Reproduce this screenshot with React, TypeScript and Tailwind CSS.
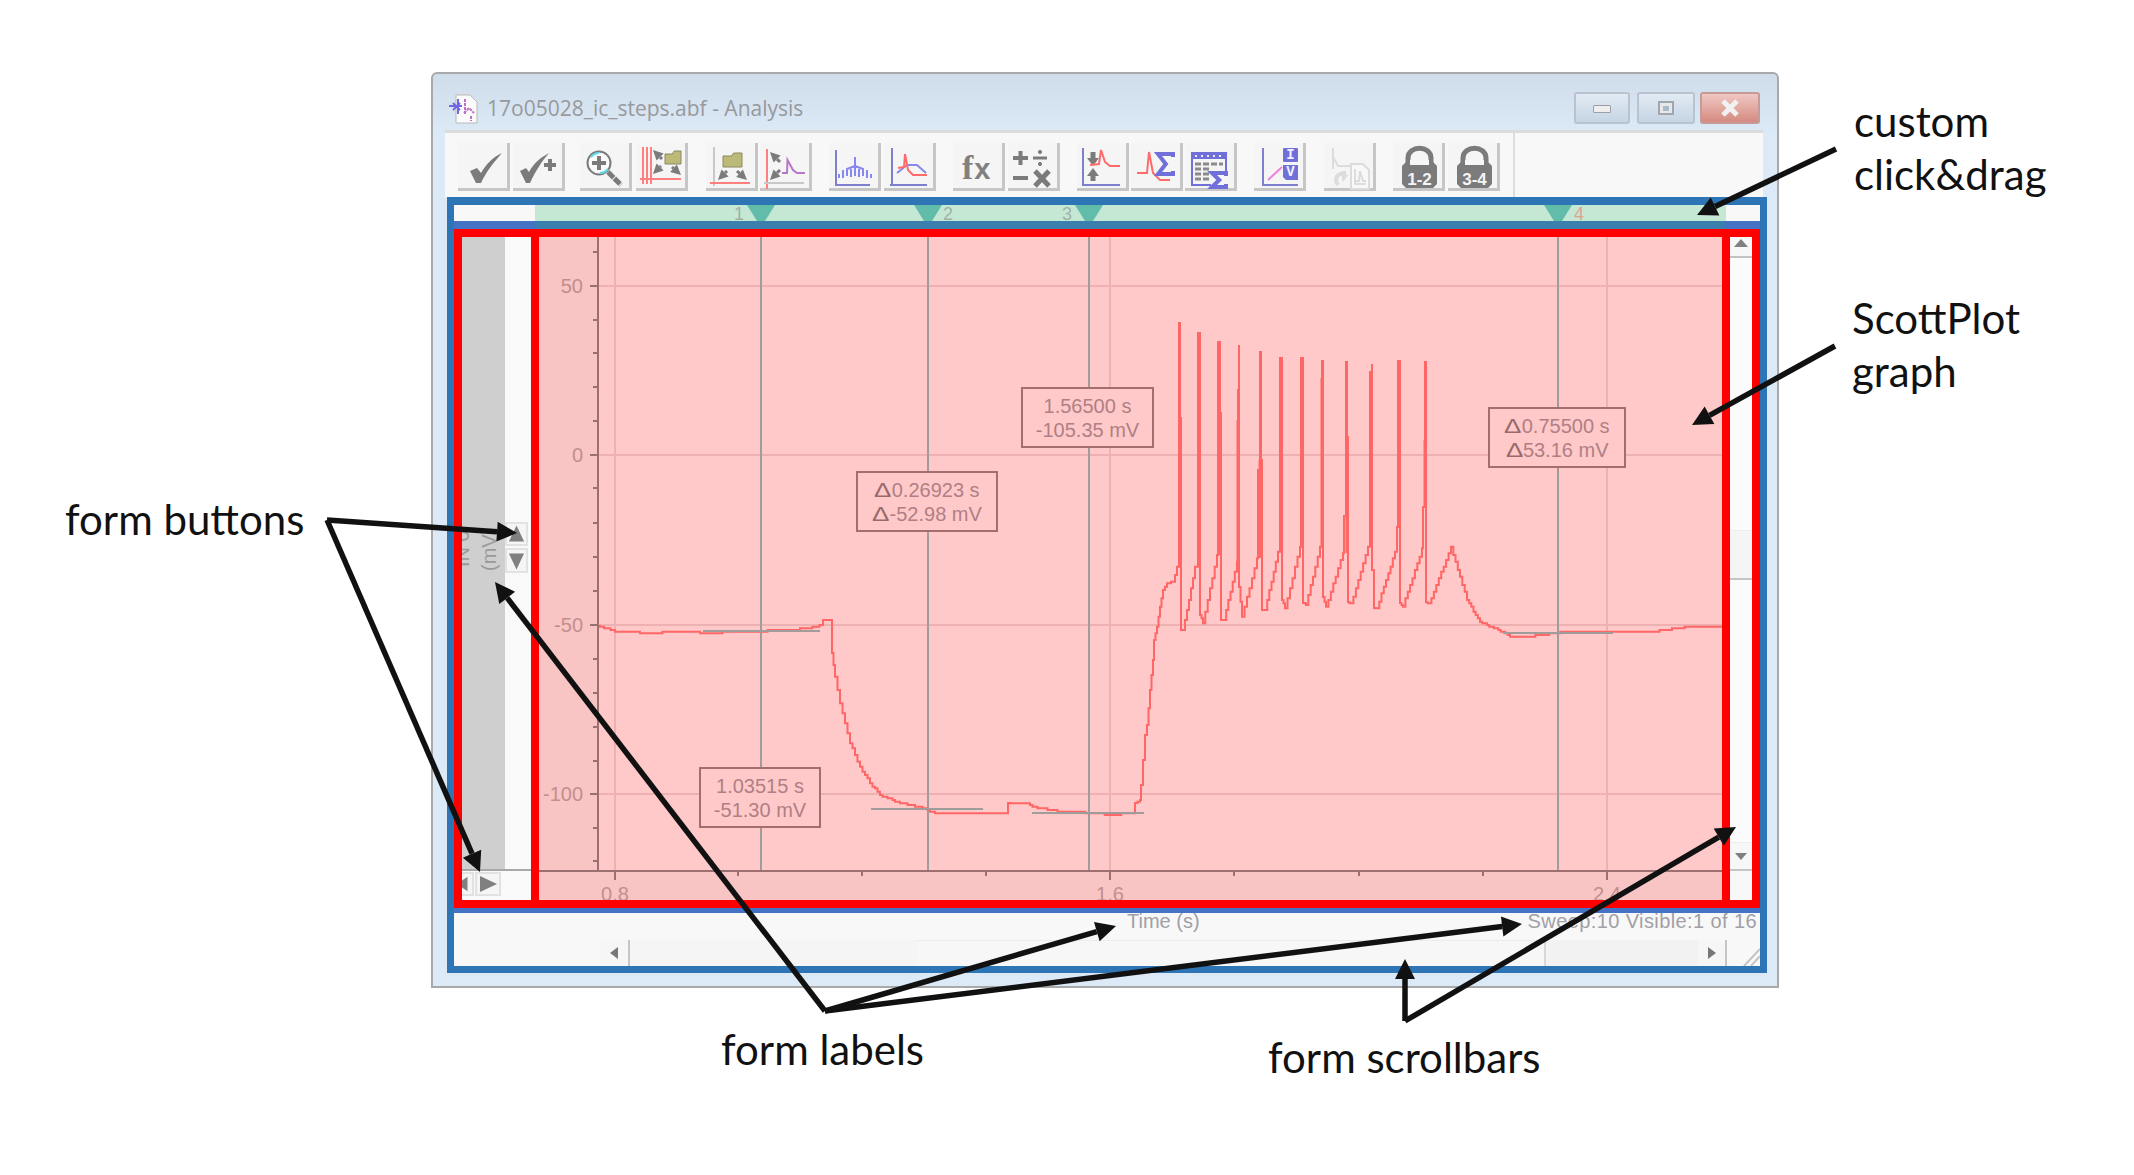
import type { ReactNode } from "react";

type Pt = [number, number];

const GRAY = "#7b7b7b";
const AXIS_BLUE = "#7f7fd0";
const TRACE_RED = "#ff7f7f";
const PURPLE = "#7070d8";

// turns a polyline into the staircase a low res plot gives
const stepped = (pts: Pt[]) => {
  let d = `M${pts[0][0]} ${pts[0][1]}`;
  for (let i = 1; i < pts.length; i++) {
    const [x0, y0] = pts[i - 1];
    const [x1, y1] = pts[i];
    const n = Math.ceil(Math.abs(x1 - x0) / 2.5);
    if (n <= 1) {
      d += ` H${x1} V${y1}`;
      continue;
    }
    for (let j = 1; j <= n; j++) {
      const x = x0 + ((x1 - x0) * j) / n;
      const y = Math.round((y0 + ((y1 - y0) * j) / n) * 0.6) / 0.6;
      d += ` H${x.toFixed(1)} V${y.toFixed(1)}`;
    }
  }
  return d;
};

const trace: Pt[] = [
  [598, 626], [606, 628], [615, 631], [630, 632], [650, 633], [670, 632], [690, 632], [710, 633], [730, 632],
  [760, 631], [790, 630], [810, 628], [822, 625], [823, 620], [830, 620], [832, 653], [835, 677], [840, 703],
  [845, 723], [850, 743], [860, 767], [870, 783], [880, 795], [900, 803], [920, 807], [935, 813], [1007, 813],
  [1008, 803], [1015, 804], [1025, 803], [1035, 807], [1050, 810], [1065, 812], [1078, 812], [1112, 815],
  [1133, 813], [1135, 803], [1140, 800], [1141, 785], [1143, 760], [1145, 735], [1147, 725], [1150, 690],
  [1153, 660], [1154, 640], [1157, 627], [1160, 607], [1163, 590], [1167, 583], [1173, 582], [1177, 567],
  [1179, 563], [1179, 323], [1180, 323], [1180, 418], [1181, 418], [1181, 630], [1183, 630], [1187, 610],
  [1195, 567], [1198, 565], [1198, 333], [1200, 337], [1200, 615], [1203, 623], [1217, 555], [1218, 342],
  [1219, 342], [1220, 413], [1221, 620], [1224, 620], [1237, 562], [1238, 390], [1239, 345], [1239, 587],
  [1242, 617], [1257, 558], [1258, 470], [1260, 352], [1261, 460], [1262, 460], [1262, 610], [1265, 610],
  [1278, 552], [1280, 358], [1282, 370], [1282, 600], [1285, 608], [1300, 547], [1301, 358], [1303, 415],
  [1303, 603], [1306, 605], [1320, 547], [1322, 361], [1323, 378], [1323, 597], [1326, 607], [1343, 553],
  [1344, 516], [1346, 362], [1347, 437], [1348, 437], [1348, 602], [1351, 604], [1368, 547], [1370, 372],
  [1372, 364], [1372, 570], [1374, 570], [1374, 608], [1377, 608], [1395, 552], [1397, 527], [1398, 361],
  [1400, 433], [1400, 603], [1403, 606], [1422, 549], [1423, 507], [1425, 362], [1426, 440], [1426, 602],
  [1429, 604], [1451, 547], [1460, 577], [1467, 600], [1480, 622], [1503, 632], [1510, 636], [1533, 636],
  [1549, 634], [1567, 631], [1657, 631], [1672, 629], [1687, 627], [1722, 627],
];

// lower part of each spike reads thicker in the plot
const spikeBases: [number, number, number][] = [
  [1180, 418, 563], [1199, 337, 565], [1220, 413, 555], [1238, 420, 562], [1260, 460, 558], [1281, 370, 552],
  [1302, 415, 547], [1322, 378, 547], [1347, 437, 553], [1371, 372, 547], [1399, 433, 527], [1425, 440, 507],
];

const yLabels: [string, number][] = [["50", 286], ["0", 455], ["-50", 625], ["-100", 794]];
const yMinor = [252, 320, 353, 387, 421, 488, 523, 557, 591, 659, 693, 727, 761, 828, 861];
const xLabels: [string, number][] = [["0.8", 615], ["1.6", 1110], ["2.4", 1607]];
const xMinor = [738, 862, 986, 1234, 1359, 1483];
const cursors = [761, 928, 1089, 1558];
const levels: [number, number, number][] = [[703, 820, 631], [871, 983, 809], [1032, 1144, 813], [1503, 1613, 633]];

const readouts = [
  { pos: "left-[160px] top-[530px] w-[122px]", lines: ["1.03515 s", "-51.30 mV"] },
  { pos: "left-[317px] top-[234px] w-[142px]", lines: ["Δ0.26923 s", "Δ-52.98 mV"] },
  { pos: "left-[482px] top-[150px] w-[133px]", lines: ["1.56500 s", "-105.35 mV"] },
  { pos: "left-[949px] top-[170px] w-[138px]", lines: ["Δ0.75500 s", "Δ53.16 mV"] },
];

const Plot = () => (
  <div className="relative w-[1183px] shrink-0 overflow-hidden bg-[#f8c4c4] font-['Liberation_Sans',sans-serif]">
    <svg className="absolute inset-0" width={1183} height={663} viewBox="539 237 1183 663">
      <rect x={598} y={237} width={1124} height={634} fill="#ffc9c9" />
      {yLabels.map(([, y]) => (
        <line key={y} x1={598} x2={1722} y1={y} y2={y} stroke="#eeb1b1" strokeWidth={2} />
      ))}
      {xLabels.map(([, x]) => (
        <line key={x} x1={x} x2={x} y1={237} y2={871} stroke="#eeb1b1" strokeWidth={2} />
      ))}
      {cursors.map((x) => (
        <line key={x} x1={x} x2={x} y1={237} y2={871} stroke="#a09c9c" strokeWidth={2} />
      ))}
      <path d={stepped(trace)} fill="none" stroke="#ff6666" strokeWidth={2} />
      {spikeBases.map(([x, a, b]) => (
        <line key={x} x1={x} x2={x} y1={a} y2={b} stroke="#ff6666" strokeWidth={3} />
      ))}
      {levels.map(([a, b, y]) => (
        <line key={a} x1={a} x2={b} y1={y} y2={y} stroke="#a09c9c" strokeWidth={2} />
      ))}
      <line x1={598} x2={598} y1={237} y2={872} stroke="#9c7070" strokeWidth={2} />
      <line x1={539} x2={1722} y1={871} y2={871} stroke="#9c7070" strokeWidth={2} />
      {yMinor.map((y) => (
        <line key={y} x1={593} x2={598} y1={y} y2={y} stroke="#9c7070" strokeWidth={2} />
      ))}
      {xMinor.map((x) => (
        <line key={x} x1={x} x2={x} y1={871} y2={876} stroke="#9c7070" strokeWidth={2} />
      ))}
      {yLabels.map(([t, y]) => (
        <g key={t}>
          <line x1={590} x2={598} y1={y} y2={y} stroke="#9c7070" strokeWidth={2} />
          <text x={583} y={y + 7} textAnchor="end" fontSize={20} fill="#c18f8f">{t}</text>
        </g>
      ))}
      {xLabels.map(([t, x]) => (
        <g key={t}>
          <line x1={x} x2={x} y1={871} y2={880} stroke="#9c7070" strokeWidth={2} />
          <text x={x} y={901} textAnchor="middle" fontSize={20} fill="#c18f8f">{t}</text>
        </g>
      ))}
    </svg>
    {readouts.map((r) => (
      <div
        key={r.lines[0]}
        className={`absolute ${r.pos} flex h-[61px] flex-col items-center justify-center border-2 border-[#a56e6e] bg-[#ffc9c9] text-[20px] leading-[24px] text-[#b07f85]`}
      >
        {r.lines.map((l) => (
          <span key={l} className="whitespace-nowrap">
            {l.startsWith("Δ") && <span className="mx-[2px] inline-block scale-x-[1.3] text-[#9a6a6a]">Δ</span>}
            {l.replace("Δ", "")}
          </span>
        ))}
      </div>
    ))}
  </div>
);

const Arrow = ({ from, to, w = 5.5, head = 20, color = "#111" }: { from: Pt; to: Pt; w?: number; head?: number; color?: string }) => {
  const a = Math.atan2(to[1] - from[1], to[0] - from[0]);
  const bx = to[0] - Math.cos(a) * head;
  const by = to[1] - Math.sin(a) * head;
  const nx = (-Math.sin(a) * head) / 2;
  const ny = (Math.cos(a) * head) / 2;
  return (
    <g>
      <line x1={from[0]} y1={from[1]} x2={bx} y2={by} stroke={color} strokeWidth={w} />
      <polygon points={`${to[0]},${to[1]} ${bx + nx},${by + ny} ${bx - nx},${by - ny}`} fill={color} />
    </g>
  );
};

const Ic = ({ children }: { children: ReactNode }) => (
  <svg width={52} height={48} viewBox="0 0 52 48" className="absolute left-0 top-0">{children}</svg>
);

const Small = ({ from, to }: { from: Pt; to: Pt }) => <Arrow from={from} to={to} w={3} head={10} color={GRAY} />;

const Folder = ({ x, y, w, h }: { x: number; y: number; w: number; h: number }) => (
  <path d={`M${x} ${y + 3} h${w * 0.45} l2 -3 h${w * 0.55 - 2} v${h} h${-w} z`} fill="#bdb978" stroke="#8a8a60" strokeWidth={1} />
);

const Sigma = ({ x, y, w, h }: { x: number; y: number; w: number; h: number }) => (
  <path
    d={`M${x + w} ${y + 4} V${y + 1} H${x + 1} L${x + w * 0.55} ${y + h / 2} L${x + 1} ${y + h - 1} H${x + w} V${y + h - 4}`}
    fill="none"
    stroke={PURPLE}
    strokeWidth={4}
  />
);

const Axes = ({ x, x2, top }: { x: number; x2: number; top: number }) => (
  <path d={`M${x} ${top} V42 H${x2}`} fill="none" stroke={AXIS_BLUE} strokeWidth={2} />
);

const Lock = ({ label }: { label: string }) => (
  <>
    <path d="M15 22 V15 C15 2 38 2 38 15 V22" fill="none" stroke={GRAY} strokeWidth={5} />
    <path d="M9 23 L14 18 H39 L44 23 V41 L40 45 H13 L9 41 Z" fill={GRAY} />
    <rect x={17} y={17} width={19} height={5} fill="#f7f7f7" />
    <text x={26.5} y={42} textAnchor="middle" fontSize={17} fontWeight={700} fill="#f4f4f4" fontFamily="'Liberation Sans', sans-serif">
      {label}
    </text>
  </>
);

const groups: { cls: string; icons: ReactNode[] }[] = [
  {
    cls: "ml-[13px] gap-[3px]",
    icons: [
      <path key="c" d="M12 28 L19 25 L23 30 C28 21 35 14 44 10 C36 19 28 29 23 40 L18 40 Z" fill={GRAY} />,
      <g key="c+">
        <path d="M7 28 L13 25 L16 29 C21 20 27 15 36 10 C29 18 22 29 17 40 L13 40 Z" fill={GRAY} />
        <path d="M31 22 H43 M37 16 V28" stroke={GRAY} strokeWidth={4} />
      </g>,
    ],
  },
  {
    cls: "ml-[15px] gap-[4px]",
    icons: [
      <g key="z">
        <circle cx={19} cy={20} r={11.5} fill="#fafafa" stroke={GRAY} strokeWidth={2} />
        <path d="M11 14 A11 11 0 0 1 19 10 M28 26 A11 11 0 0 1 20 30" stroke="#60d8e8" strokeWidth={2} fill="none" />
        <path d="M12 20 H26 M19 13 V27" stroke={GRAY} strokeWidth={4} />
        <path d="M28 29 L41 42" stroke={GRAY} strokeWidth={5} strokeDasharray="8 1" />
      </g>,
      <g key="f">
        <path d="M7 4 V41 M11 4 V41 M15 4 V41 M4 36 H45" stroke={TRACE_RED} strokeWidth={2} />
        <Folder x={29} y={8} w={16} h={13} />
        <Small from={[26, 16]} to={[17, 7]} />
        <Small from={[25, 23]} to={[17, 31]} />
        <Small from={[36, 24]} to={[45, 32]} />
      </g>,
    ],
  },
  {
    cls: "ml-[18px] gap-[2px]",
    icons: [
      <g key="f2">
        <path d="M8 4 V43" stroke="#c8c8c8" strokeWidth={2} />
        <path d="M4 40 H44" stroke={TRACE_RED} strokeWidth={2} />
        <Folder x={17} y={10} w={19} h={14} />
        <Small from={[21, 28]} to={[12, 37]} />
        <Small from={[31, 28]} to={[41, 37]} />
      </g>,
      <g key="s">
        <path d="M7 6 V46" stroke={TRACE_RED} strokeWidth={2} />
        <path d="M4 40 H44" stroke="#c8c8c8" strokeWidth={2} />
        <Small from={[20, 19]} to={[10, 9]} />
        <Small from={[20, 27]} to={[10, 37]} />
        <path d="M22 30 H27 L27.5 17 L33 27 L37 30 H45" fill="none" stroke="#b878c8" strokeWidth={2} />
      </g>,
    ],
  },
  {
    cls: "ml-[17px] gap-[3px]",
    icons: [
      <g key="p">
        <Axes x={7} x2={41} top={7} />
        <path
          d="M26 14 V33 M26 23 L18 26 V33 M26 23 L34 26 V33 M14 27 V35 M10 31 V35 M38 27 V35 M42 31 V35 M22 26 V34 M30 26 V34"
          fill="none"
          stroke="#8888f0"
          strokeWidth={2}
        />
      </g>,
      <g key="o">
        <Axes x={8} x2={43} top={5} />
        <path d="M6 42 H10" stroke={AXIS_BLUE} strokeWidth={2} />
        <path d="M13 30 L23 22 H33 L42 30" fill="none" stroke="#8888f0" strokeWidth={2} />
        <path d="M14 25 L20 24 L21 11 L24 27 L29 32 H43" fill="none" stroke="#ff6a6a" strokeWidth={2} />
      </g>,
    ],
  },
  {
    cls: "ml-[17px] gap-[3px]",
    icons: [
      <text key="fx" x={9} y={36} fontSize={34} fontWeight={700} fill="#808080" fontFamily="'Liberation Serif', serif">
        f<tspan dx={1} fontFamily="'Liberation Sans', sans-serif" fontSize={29}>x</tspan>
      </text>,
      <g key="ops" stroke={GRAY} strokeWidth={4}>
        <path d="M5 15 H20 M12.5 8 V22 M5 35 H20" />
        <path d="M25 15 H39" strokeWidth={3} />
        <circle cx={32} cy={9} r={1.6} fill={GRAY} strokeWidth={1} />
        <circle cx={32} cy={21} r={1.6} fill={GRAY} strokeWidth={1} />
        <path d="M27 28 L41 43 M41 28 L27 43" strokeWidth={5} />
      </g>,
    ],
  },
  {
    cls: "ml-[17px] gap-[2px]",
    icons: [
      <g key="b">
        <Axes x={6} x2={43} top={5} />
        <path d="M16 9 V16" stroke={GRAY} strokeWidth={5} />
        <polygon points="10,15 22,15 16,23" fill={GRAY} />
        <polygon points="10,33 22,33 16,25" fill={GRAY} />
        <path d="M16 32 V38" stroke={GRAY} strokeWidth={5} />
        <path d="M13 22 L22 21 L24 7 L28 19 L33 23 H43" fill="none" stroke="#ff6a6a" strokeWidth={2} />
      </g>,
      <g key="sum">
        <path d="M6 30 H16 L18 9 L22 30 L29 37 H39" fill="none" stroke="#ff6a6a" strokeWidth={2} />
        <Sigma x={26} y={10} w={16} h={22} />
      </g>,
      <g key="tab">
        <rect x={7} y={10} width={34} height={32} fill="#f4f4f4" stroke={PURPLE} strokeWidth={2} />
        <rect x={7} y={10} width={34} height={6} fill={PURPLE} />
        <path d="M10 13 H38" stroke="#e8e8ff" strokeWidth={2} strokeDasharray="2 4" />
        <path d="M10 21 H38 M10 26 H26 M10 31 H24 M10 36 H24" stroke="#8a8a8a" strokeWidth={3} strokeDasharray="6 2" />
        <rect x={26} y={28} width={16} height={18} fill="#f6f6f6" />
        <Sigma x={26} y={29} w={15} h={16} />
      </g>,
    ],
  },
  {
    cls: "ml-[17px]",
    icons: [
      <g key="iv" fontFamily="'Liberation Mono', monospace" fontWeight={700} fontSize={14} fill="#f0f0ff" textAnchor="middle">
        <Axes x={9} x2={44} top={5} />
        <path d="M8 42 H44" stroke={AXIS_BLUE} strokeWidth={2} />
        <path d="M14 37 L28 24" stroke="#f080e0" strokeWidth={2} />
        <rect x={29} y={5} width={15} height={14} rx={1} fill={PURPLE} />
        <text x={36.5} y={16}>I</text>
        <path d="M29 22 H44 V37 H32 L29 34 Z" fill={PURPLE} />
        <text x={36.5} y={33}>V</text>
      </g>,
    ],
  },
  {
    cls: "ml-[18px]",
    icons: [
      <g key="dis" fill="none" stroke="#dcdcdc" strokeWidth={2}>
        <path d="M9 5 V26 M9 14 L14 23 H26" />
        <path d="M27 21 H39 L45 27 V46 H27 Z" fill="#f8f8f8" />
        <path d="M31 26 V41 H42 M31 38 H35 L36 28 L39 38 H42" />
        <path d="M22 30 C12 30 10 36 14 42" strokeWidth={4} />
        <polygon points="17,30 24,32 19,39" fill="#dcdcdc" stroke="none" />
      </g>,
    ],
  },
  {
    cls: "ml-[17px] gap-[3px]",
    icons: [<Lock key="l1" label="1-2" />, <Lock key="l2" label="3-4" />],
  },
];

const Toolbar = () => (
  <div className="ml-[12px] flex h-[67px] w-[1318px] border-t-[3px] border-[#dcdcdc] bg-[#f8f8f8] pt-[10px]">
    {groups.map((g, i) => (
      <div key={i} className={`flex h-[48px] ${g.cls}`}>
        {g.icons.map((icon, j) => (
          <div key={j} className="relative h-[48px] w-[52px] border-b-[3px] border-r-[3px] border-[#c6c6c6] bg-[#f5f5f5]">
            <Ic>{icon}</Ic>
          </div>
        ))}
      </div>
    ))}
    <div className="ml-[13px] -mt-[10px] h-[64px] w-[2px] bg-[#dddddd]" />
  </div>
);

const TitleButton = ({ cls, children }: { cls: string; children: ReactNode }) => (
  <div className={`flex h-[32px] items-center justify-center rounded-[3px] border-2 ${cls}`}>{children}</div>
);

const TitleBar = () => (
  <div className="flex h-[56px] shrink-0 items-center pl-[16px] pr-[17px] pt-[14px]">
    <svg width={30} height={30} viewBox="0 0 30 30">
      <path d="M7 1 H21 L28 8 V29 H7 Z" fill="#fbfbfb" stroke="#b9b9b9" />
      <path d="M0 12 H13 M9 5 V20 M4 9 L11 16 M4 16 L11 9" stroke="#7068e0" strokeWidth={2} />
      <path d="M16 5 V20 M22 22 V27 M15 19 L20 14 L25 19" fill="none" stroke="#c070c0" strokeWidth={2} strokeDasharray="3 1" />
    </svg>
    <span className="ml-[8px] font-['Open_Sans',sans-serif] text-[21px] text-[#98999c]">17o05028_ic_steps.abf - Analysis</span>
    <div className="ml-auto -mt-[2px] flex">
      <TitleButton cls="w-[56px] border-[#b9c3cf] bg-gradient-to-b from-[#e2ebf4] to-[#c6d4e3]">
        <div className="mt-[2px] h-[8px] w-[18px] rounded-[1px] border border-[#9aa0a6] bg-[#eeeeee]" />
      </TitleButton>
      <TitleButton cls="ml-[7px] w-[58px] border-[#b9c3cf] bg-gradient-to-b from-[#e2ebf4] to-[#c6d4e3]">
        <div className="flex h-[14px] w-[16px] items-center justify-center border-2 border-[#a0a6ad] bg-[#e8e8e8]">
          <div className="h-[5px] w-[6px] bg-[#a9b9ca]" />
        </div>
      </TitleButton>
      <TitleButton cls="ml-[5px] w-[60px] border-[#c59a98] bg-gradient-to-b from-[#f0c8c4] to-[#d48a80]">
        <svg width={20} height={18} viewBox="0 0 20 18">
          <path d="M3 2 L17 16 M17 2 L3 16" stroke="#f2f2f2" strokeWidth={5} />
        </svg>
      </TitleButton>
    </div>
  </div>
);

const MiniButton = ({ cls, points }: { cls: string; points: string }) => (
  <div className={`flex items-center justify-center border-2 border-[#e2e2e2] bg-[#f5f5f5] ${cls}`}>
    <svg width={20} height={20} viewBox="0 0 20 20">
      <polygon points={points} fill="#808080" />
    </svg>
  </div>
);

const LeftPanel = () => (
  <div className="flex w-[69px] shrink-0 flex-col">
    <div className="flex h-[634px] border-b-2 border-[#a8a8a8]">
      <div className="flex w-[43px] items-start justify-end overflow-hidden bg-[#cfcfcf] pr-[2px] pt-[279px]">
        <div className="h-[66px] w-[54px] shrink-0 rotate-180 text-center font-['Liberation_Sans',sans-serif] text-[20px] leading-[27px] text-[#9a9a9a] [writing-mode:vertical-rl]">
          <div>IN 0</div>
          <div>(mV)</div>
        </div>
      </div>
      <div className="flex w-[26px] flex-col gap-[2px] bg-[#f9f9f9] pl-[0px] pt-[285px]">
        <MiniButton cls="h-[24px] w-[23px]" points="10,1 18,18 2,18" />
        <MiniButton cls="h-[25px] w-[23px]" points="2,2 18,2 10,19" />
      </div>
    </div>
    <div className="flex flex-1 items-start gap-[1px] overflow-hidden bg-[#f9f9f9] pt-[1px]">
      <MiniButton cls="-ml-[10px] h-[24px] w-[22px]" points="15,2 15,18 3,10" />
      <MiniButton cls="h-[24px] w-[26px]" points="2,2 19,10 2,18" />
    </div>
  </div>
);

const VScroll = () => (
  <div className="flex w-[22px] shrink-0 flex-col bg-[#f8f8f8]">
    <div className="flex h-[21px] items-start justify-center border-b-2 border-[#c4c4c4] bg-[#f7f7f7] pt-[2px]">
      <svg width={14} height={8} viewBox="0 0 14 8"><polygon points="7,0 14,8 0,8" fill="#808080" /></svg>
    </div>
    <div className="h-[272px] bg-[#fbfbfb]" />
    <div className="h-[50px] border-b-2 border-t border-[#eeeeee] border-b-[#c4c4c4] bg-[#f5f5f5]" />
    <div className="h-[262px] bg-[#fbfbfb]" />
    <div className="flex h-[29px] items-center justify-center border-b-2 border-t border-[#eeeeee] border-b-[#c4c4c4] bg-[#f7f7f7]">
      <svg width={12} height={7} viewBox="0 0 12 7"><polygon points="0,0 12,0 6,7" fill="#808080" /></svg>
    </div>
  </div>
);

const HScroll = () => (
  <div className="flex h-[26px] items-stretch">
    <div className="w-[146px]" />
    <div className="flex w-[30px] items-center justify-center border-r-2 border-[#c6c6c6] bg-[#f6f6f6]">
      <svg width={8} height={12} viewBox="0 0 8 12"><polygon points="8,0 8,12 0,6" fill="#777777" /></svg>
    </div>
    <div className="w-[287px] bg-[#f5f5f5]" />
    <div className="w-[629px] border-r-2 border-t border-[#ececec] border-r-[#d8d8d8] bg-[#f7f7f7]" />
    <div className="w-[152px] bg-[#f2f2f2]" />
    <div className="flex w-[29px] items-center justify-center border-r-2 border-[#c6c6c6] bg-[#f6f6f6]">
      <svg width={8} height={12} viewBox="0 0 8 12"><polygon points="0,0 0,12 8,6" fill="#777777" /></svg>
    </div>
    <div className="w-[16px]" />
    <svg width={17} height={26} viewBox="0 0 17 26">
      <path d="M1 26 L17 9 M8 26 L17 16" stroke="#c4c4c4" strokeWidth={2} />
    </svg>
  </div>
);

const CursorStrip = () => (
  <div className="flex h-[16px] bg-[#f8f8f8]">
    <div className="w-[81px]" />
    <svg width={1191} height={16} viewBox="535 205 1191 16" className="bg-[#c5e8d5]">
      {cursors.map((x) => (
        <polygon key={x} points={`${x - 14},205 ${x + 14},205 ${x + 4},221 ${x - 4},221`} fill="#62bcaa" />
      ))}
      <g fontFamily="'Liberation Sans', sans-serif" fontSize={18}>
        <text x={739} y={220} textAnchor="middle" fill="#9fb3a5">1</text>
        <text x={948} y={220} textAnchor="middle" fill="#9fb3a5">2</text>
        <text x={1067} y={220} textAnchor="middle" fill="#9fb3a5">3</text>
        <text x={1579} y={220} textAnchor="middle" fill="#e0a48e">4</text>
      </g>
    </svg>
  </div>
);

const AnalysisWindow = () => (
  <div className="flex h-[916px] w-[1348px] flex-col rounded-t-[6px] border-2 border-[#a9a9a9] bg-[#dce9f6] bg-gradient-to-b from-[#cfdcea] from-[0px] to-[#dce9f6] to-[60px]">
    <TitleBar />
    <Toolbar />
    <div className="ml-[14px] flex h-[776px] w-[1320px] flex-col border-b-[7px] border-l-[7px] border-r-[7px] border-t-[8px] border-[#2e75b6]">
      <CursorStrip />
      <div className="flex h-[8px] bg-[#4472c4]">
        <div className="ml-[81px] w-[1191px] bg-[#3a7fad]" />
      </div>
      <div className="flex h-[679px] border-8 border-[#ff0000] bg-[#ff0000]">
        <LeftPanel />
        <div className="w-[8px] shrink-0" />
        <Plot />
        <div className="w-[8px] shrink-0" />
        <VScroll />
      </div>
      <div className="h-[5px] bg-[#4472c4]" />
      <div className="flex flex-1 flex-col bg-[#f8f8f8]">
        <div className="flex h-[27px] items-start pl-[673px] pr-[3px] font-['Liberation_Sans',sans-serif] text-[20px] leading-[16px] text-[#a0a0a6]">
          <span>Time (s)</span>
          <span className="ml-auto tracking-[0.4px]">Sweep:10 Visible:1 of 16</span>
        </div>
        <HScroll />
      </div>
    </div>
  </div>
);

const notes = [
  { pos: "left-[1854px] top-[95px]", lines: ["custom", "click&drag"] },
  { pos: "left-[1852px] top-[292px]", lines: ["ScottPlot", "graph"] },
  { pos: "left-[65px] top-[493px]", lines: ["form buttons"] },
  { pos: "left-[721px] top-[1023px]", lines: ["form labels"] },
  { pos: "left-[1268px] top-[1031px]", lines: ["form scrollbars"] },
];

const arrows: [Pt, Pt][] = [
  [[1836, 149], [1697, 215]],
  [[1835, 346], [1692, 425]],
  [[327, 520], [517, 533]],
  [[327, 520], [480, 872]],
  [[825, 1011], [495, 582]],
  [[825, 1011], [1116, 926]],
  [[825, 1011], [1522, 924]],
  [[1405, 1021], [1405, 959]],
  [[1405, 1021], [1736, 827]],
];

export default function App() {
  return (
    <div className="relative h-[1175px] w-[2134px] overflow-hidden bg-white pl-[431px] pt-[72px]">
      <AnalysisWindow />
      <svg className="pointer-events-none absolute left-0 top-0" width={2134} height={1175}>
        {arrows.map(([from, to]) => (
          <Arrow key={`${to[0]}-${to[1]}`} from={from} to={to} />
        ))}
      </svg>
      {notes.map((n) => (
        <div key={n.pos} className={`absolute ${n.pos} font-['Lato',sans-serif] text-[42px] leading-[53px] text-[#111]`}>
          {n.lines.map((l) => (
            <div key={l} className="whitespace-nowrap">{l}</div>
          ))}
        </div>
      ))}
    </div>
  );
}
